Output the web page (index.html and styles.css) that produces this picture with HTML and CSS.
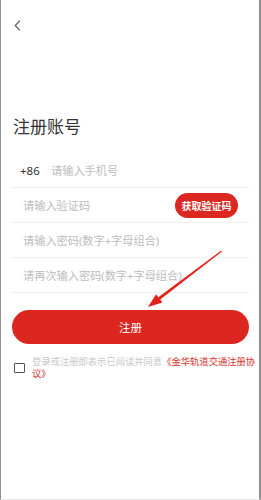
FILE: index.html
```html
<!DOCTYPE html>
<html lang="zh-CN">
<head>
    <meta charset="UTF-8">
    <meta name="viewport" content="width=device-width, initial-scale=1.0">
    <title>注册账号</title>
    <link rel="stylesheet" href="styles.css">
</head>
<body>
    <div class="phone">
        <div class="top-bar">
            <a href="#" class="back">
                <svg width="7" height="11" viewBox="0 0 7 11">
                    <path d="M5.8 0.8 L1.2 5.5 L5.8 10.2" fill="none" stroke="#666" stroke-width="1.3"/>
                </svg>
            </a>
        </div>

        <h1 class="title">注册账号</h1>

        <form class="reg-form" onsubmit="return false">
            <div class="row">
                <span class="prefix">+86</span>
                <input type="tel" class="input-field" placeholder="请输入手机号">
            </div>
            <div class="row">
                <input type="text" class="input-field" placeholder="请输入验证码">
                <button type="button" class="code-btn">获取验证码</button>
            </div>
            <div class="row">
                <input type="password" class="input-field" placeholder="请输入密码(数字+字母组合)">
            </div>
            <div class="row">
                <input type="password" class="input-field" placeholder="请再次输入密码(数字+字母组合)">
            </div>

            <button type="submit" class="btn">注册</button>

            <label class="agree">
                <span class="check"></span>
                <span class="agree-text">登录或注册即表示已阅读并同意<a href="#">《金华轨道交通注册协议》</a></span>
            </label>
        </form>

        <!-- annotation arrow -->
        <svg class="arrow" width="261" height="500" viewBox="0 0 261 500">
            <polygon points="221.3,250.6 222,251.6 159.9,299.7 158.3,297.3" fill="#e4201b"/>
            <polygon points="148,307 156.1,294.2 162.4,302.6" fill="#e4201b"/>
        </svg>
    </div>
</body>
</html>
```

FILE: styles.css
```css
* {
    margin: 0;
    padding: 0;
    box-sizing: border-box;
}

body {
    font-family: "Noto Sans", "Noto Sans CJK SC", sans-serif;
    background-color: #ffffff;
    color: #333333;
}

.phone {
    position: relative;
    width: 261px;
    height: 500px;
    overflow: hidden;
    border-left: 1px solid #8e8e8e;
    border-right: 2px solid #8e8e8e;
    border-bottom: 1px solid #e6e6e6;
}

.top-bar {
    height: 40px;
    padding: 14px 0 0 13px;
}

.back {
    display: inline-block;
}

.back svg {
    display: block;
}

.title {
    margin-top: 77px;
    padding-left: 12px;
    font-size: 17px;
    line-height: 20px;
    font-weight: normal;
    color: #333333;
}

.reg-form {
    margin-top: 16px;
}

.row {
    display: flex;
    align-items: center;
    height: 35px;
    margin: 0 10px 0 11px;
    border-bottom: 1px solid #eeeeee;
}

.prefix {
    padding-left: 8px;
    width: 39px;
    font-size: 11.5px;
    color: #333333;
}

.input-field {
    flex: 1;
    min-width: 0;
    border: none;
    outline: none;
    background: transparent;
    font-family: inherit;
    font-size: 11.2px;
    color: #333333;
}

.row > .input-field:first-child {
    padding-left: 11px;
}

.input-field::placeholder {
    color: #bdbdbd;
}

.code-btn {
    width: 63px;
    height: 25px;
    margin-right: 11px;
    border: none;
    border-radius: 13px;
    background-color: #dc2720;
    color: #ffffff;
    font-family: inherit;
    font-size: 10px;
    font-weight: bold;
}

.btn {
    display: block;
    width: 237px;
    height: 34px;
    margin: 17px 0 0 11px;
    border: none;
    border-radius: 17px;
    background-color: #dc2720;
    color: #ffffff;
    font-family: inherit;
    font-size: 11.5px;
    cursor: pointer;
}

.agree {
    display: flex;
    align-items: flex-start;
    gap: 7px;
    margin-top: 12px;
    padding-left: 13px;
}

.check {
    flex: none;
    width: 11px;
    height: 10px;
    margin-top: 7px;
    border: 1.5px solid #555555;
    border-radius: 1px;
}

.agree-text {
    width: 226px;
    font-size: 9.3px;
    line-height: 12px;
    color: #c8c8c8;
}

.agree-text a {
    color: #d8322b;
    text-decoration: none;
}

.arrow {
    position: absolute;
    left: -1px;
    top: 0;
    pointer-events: none;
}
```
